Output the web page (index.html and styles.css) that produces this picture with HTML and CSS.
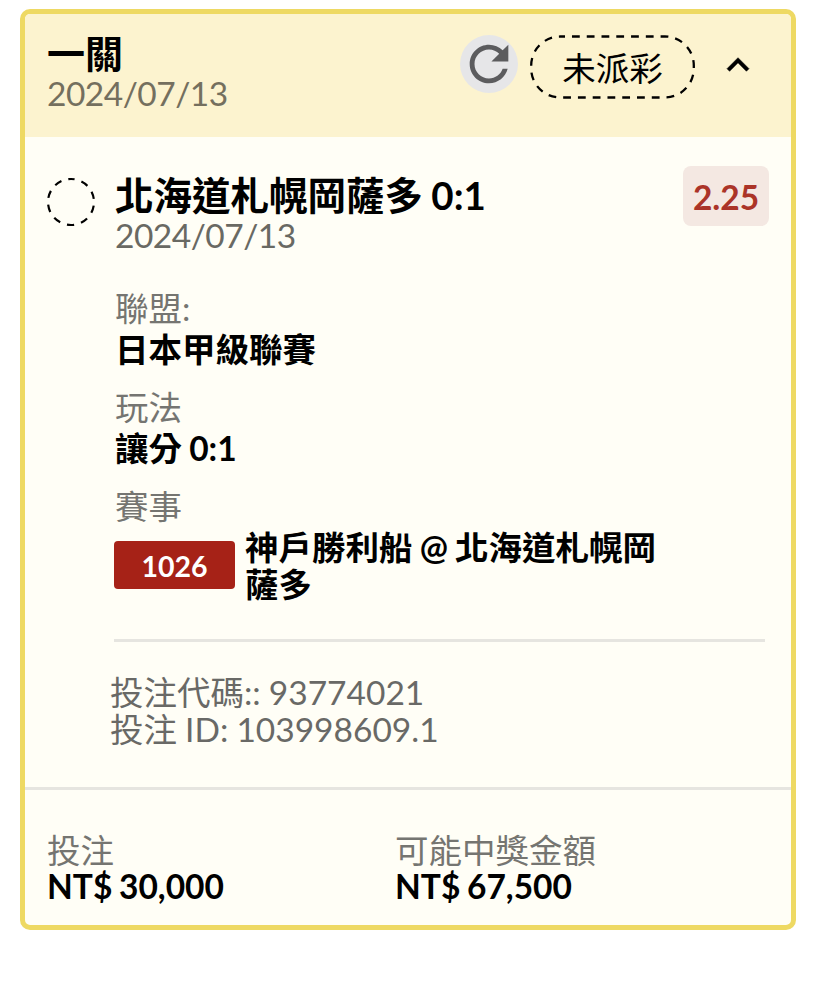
FILE: index.html
```html
<!DOCTYPE html>
<html lang="zh-Hant">
<head>
  <meta charset="UTF-8" />
  <title>投注紀錄</title>
  <link rel="stylesheet" href="styles.css">
</head>
<body>
  <div class="card">
    <div class="card-header">
      <div class="header-info">
        <h2>一關</h2>
        <p class="date">2024/07/13</p>
      </div>
      <button class="refresh">
        <svg viewBox="0 0 24 24"><path d="M17.65 6.35C16.2 4.9 14.21 4 12 4c-4.42 0-7.99 3.58-7.99 8s3.57 8 7.99 8c3.73 0 6.84-2.55 7.73-6h-2.08c-.82 2.33-3.04 4-5.65 4-3.31 0-6-2.69-6-6s2.69-6 6-6c1.66 0 3.14.69 4.22 1.78L13 11h7V4l-2.35 2.35z"/></svg>
      </button>
      <div class="status">
        <svg viewBox="0 0 165 64"><rect x="1.2" y="1.5" width="162.6" height="61" rx="29"/></svg>
        <span>未派彩</span>
      </div>
      <button class="toggle">
        <svg viewBox="0 0 24 24"><path d="M12 8l-6 6 1.41 1.41L12 10.83l4.59 4.58L18 14z"/></svg>
      </button>
    </div>

    <div class="bet">
      <svg class="pending" viewBox="0 0 50 50"><circle cx="25" cy="25" r="23"/></svg>
      <div class="bet-main">
        <div class="bet-title">
          <div>
            <h3>北海道札幌岡薩多 0:1</h3>
            <p class="date">2024/07/13</p>
          </div>
          <span class="odds">2.25</span>
        </div>
        <dl class="details">
          <dt>聯盟:</dt>
          <dd>日本甲級聯賽</dd>
          <dt>玩法</dt>
          <dd>讓分 0:1</dd>
          <dt>賽事</dt>
          <dd class="match">
            <span class="code">1026</span>
            <span class="teams">神戶勝利船 @ 北海道札幌岡薩多</span>
          </dd>
        </dl>
        <div class="ids">
          <p>投注代碼:: 93774021</p>
          <p>投注 ID: 103998609.1</p>
        </div>
      </div>
    </div>

    <div class="card-footer">
      <div>
        <p class="label">投注</p>
        <p class="amount">NT$ 30,000</p>
      </div>
      <div>
        <p class="label">可能中獎金額</p>
        <p class="amount">NT$ 67,500</p>
      </div>
    </div>
  </div>
</body>
</html>
```

FILE: styles.css
```css
* { box-sizing: border-box; margin: 0; padding: 0; }
body {
  background: #fff; color: #000;
  font-family: Lato, "Noto Sans CJK TC", sans-serif;
  font-size: 33.5px; line-height: 37px;
}
button { border: none; background: none; }
svg { display: block; }

.card {
  width: 776px; height: 921px; margin: 9px 0 0 20px;
  border: 5px solid #eed963; border-radius: 10px;
  background: #fffef6; overflow: hidden;
  display: flex; flex-direction: column;
}

/* header */
.card-header {
  display: flex; align-items: flex-start;
  height: 123px; padding: 21px 31px 0 22px; background: #fcf3cf;
}
.header-info { flex: 1; }
.card-header h2 { font-size: 38px; line-height: 36px; padding-bottom: 4px; }
.date { color: #696963; letter-spacing: -0.5px; }
.card-header .date { color: #746f5e; }
.refresh {
  width: 58px; height: 58px; border-radius: 50%;
  background: #e6e6e8; margin-right: 12px;
}
.refresh svg { width: 58px; height: 58px; fill: #5c5c5e; }
.status {
  position: relative; width: 165px; height: 64px; padding-top: 2px;
  display: flex; align-items: center; justify-content: center;
}
.status svg { position: absolute; top: 0; left: 0; width: 165px; height: 64px; }
.status rect {
  fill: none; stroke: #000; stroke-width: 2.3;
  stroke-dasharray: 7.8 6.97; stroke-dashoffset: 3;
}
.toggle { width: 44px; height: 44px; margin: 8px 0 0 21px; }
.toggle svg { width: 44px; height: 44px; stroke: #000; stroke-width: 0.3; }

/* bet */
.bet {
  display: flex; height: 653px; padding: 29px 22px 0 21px;
  border-bottom: 3px solid #e6e5e0;
}
.pending { width: 50px; height: 50px; margin: 11px 19px 0 0; flex-shrink: 0; }
.pending circle {
  fill: none; stroke: #000; stroke-width: 2.2;
  stroke-dasharray: 7.4 7.05; stroke-dashoffset: 3.7;
  transform: rotate(-90deg); transform-origin: center;
}
.bet-main { flex: 1; }
.bet-title { display: flex; justify-content: space-between; height: 124px; }
.bet-title h3 {
  font-size: 38.5px; line-height: 36px; word-spacing: -1px;
  margin-top: 11px; padding-bottom: 4px;
}
.odds {
  width: 86px; height: 60px; border-radius: 8px;
  background: #f4e8e2; color: #ab3428;
  font-weight: 700; line-height: 62px; text-align: center;
}
.details {
  width: 651px; height: 352px; margin-left: -1px; padding-left: 1px;
  border-bottom: 3px solid #e6e5e0;
}
.details dt { color: #757571; height: 41px; }
.details dd { font-weight: 700; height: 58px; word-spacing: -1px; }
.details .match { display: flex; align-items: center; gap: 10px; height: 73px; margin-left: -1px; }
.code {
  width: 121px; height: 48px; border-radius: 4px; flex-shrink: 0;
  background: #a62217; color: #fff; margin-bottom: 2px;
  font-size: 28.5px; line-height: 50px; text-align: center;
}
.teams { width: 420px; padding-top: 1px; }
.ids { color: #696966; word-spacing: -0.5px; margin: 32px 0 0 -5px; }

/* footer */
.card-footer { display: grid; grid-template-columns: 348px 1fr; padding: 42px 22px 0; }
.label { color: #757571; }
.amount { font-weight: 700; line-height: 34px; word-spacing: -1.5px; }
```
